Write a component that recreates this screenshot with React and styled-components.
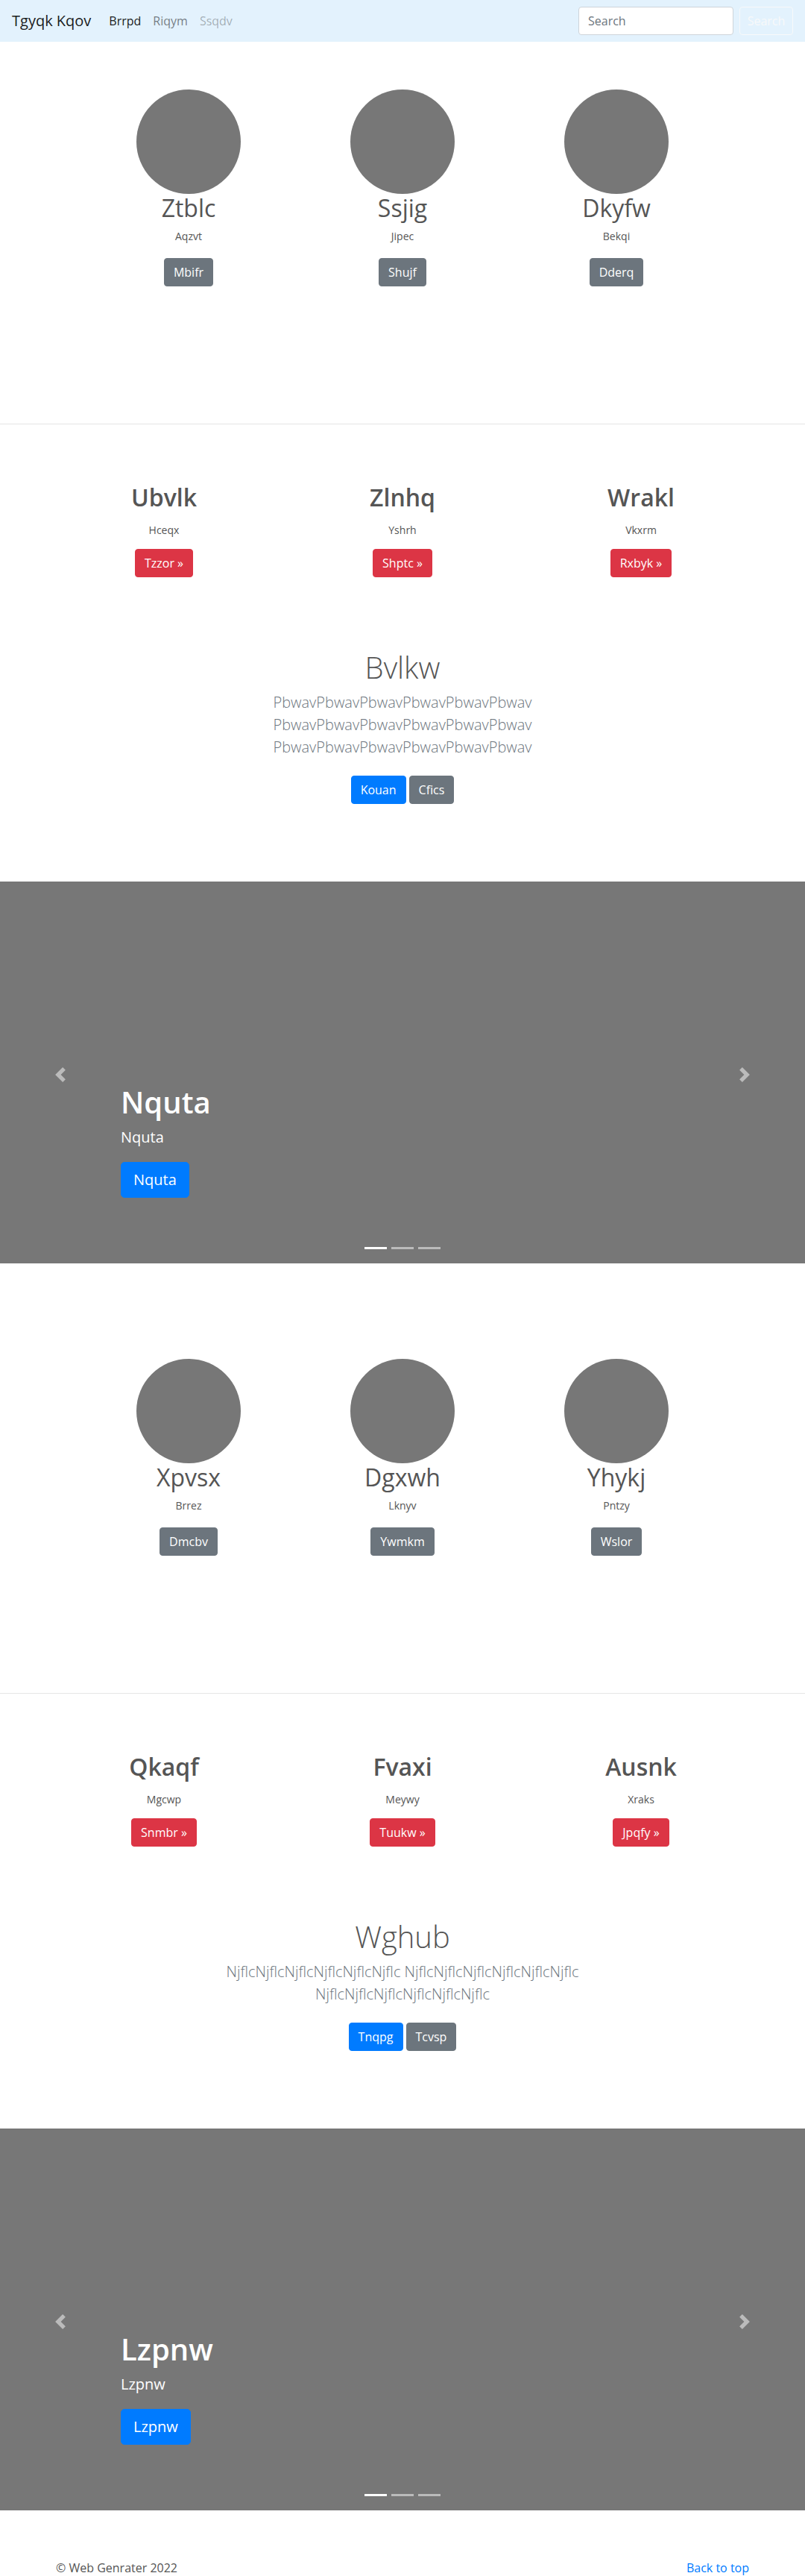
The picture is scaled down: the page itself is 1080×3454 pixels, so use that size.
import styled, { createGlobalStyle } from "styled-components";

const GlobalStyle = createGlobalStyle`
    body {
        margin: 0;
        font-family: "Segoe UI", "Open Sans", "Noto Sans", sans-serif;
        color: #555;
        background: #fff;
    }
    * {
        box-sizing: border-box;
    }
`;

const marketingTop = [
    { title: "Ztblc", text: "Aqzvt", button: "Mbifr" },
    { title: "Ssjig", text: "Jipec", button: "Shujf" },
    { title: "Dkyfw", text: "Bekqi", button: "Dderq" },
];

const marketingBottom = [
    { title: "Xpvsx", text: "Brrez", button: "Dmcbv" },
    { title: "Dgxwh", text: "Lknyv", button: "Ywmkm" },
    { title: "Yhykj", text: "Pntzy", button: "Wslor" },
];

const featuresTop = [
    { title: "Ubvlk", text: "Hceqx", button: "Tzzor »" },
    { title: "Zlnhq", text: "Yshrh", button: "Shptc »" },
    { title: "Wrakl", text: "Vkxrm", button: "Rxbyk »" },
];

const featuresBottom = [
    { title: "Qkaqf", text: "Mgcwp", button: "Snmbr »" },
    { title: "Fvaxi", text: "Meywy", button: "Tuukw »" },
    { title: "Ausnk", text: "Xraks", button: "Jpqfy »" },
];

const repeat = (word, n) => Array(n).fill(word).join("");

const ChevronLeft = () => (
    <svg width="20" height="20" viewBox="0 0 8 8" fill="#fff">
        <path d="M5.25 0l-4 4 4 4 1.5-1.5L4.25 4l2.5-2.5L5.25 0z" />
    </svg>
);

const ChevronRight = () => (
    <svg width="20" height="20" viewBox="0 0 8 8" fill="#fff">
        <path d="M2.75 0l-1.5 1.5L3.75 4l-2.5 2.5L2.75 8l4-4-4-4z" />
    </svg>
);

const Marketing = ({ items, top }) => (
    <MarketingSection $top={top}>
        <MarketingRow>
            {items.map((item) => (
                <MarketingCol key={item.title}>
                    <Circle />
                    <MarketingTitle>{item.title}</MarketingTitle>
                    <SmallText>{item.text}</SmallText>
                    <Button $variant="secondary">{item.button}</Button>
                </MarketingCol>
            ))}
        </MarketingRow>
    </MarketingSection>
);

const Features = ({ items, heading, lead, primary, secondary }) => (
    <FeatureSection>
        <FeatureRow>
            {items.map((item) => (
                <FeatureCol key={item.title}>
                    <FeatureTitle>{item.title}</FeatureTitle>
                    <FeatureText>{item.text}</FeatureText>
                    <Button $variant="danger">{item.button}</Button>
                </FeatureCol>
            ))}
        </FeatureRow>
        <Featurette>
            <FeaturetteHeading>{heading}</FeaturetteHeading>
            <Lead>{lead}</Lead>
            <ButtonGroup>
                <Button $variant="primary">{primary}</Button>
                <Button $variant="secondary">{secondary}</Button>
            </ButtonGroup>
        </Featurette>
    </FeatureSection>
);

const Carousel = ({ title }) => (
    <CarouselBox>
        <Caption>
            <CaptionTitle>{title}</CaptionTitle>
            <CaptionText>{title}</CaptionText>
            <Button $variant="primary" $size="lg">
                {title}
            </Button>
        </Caption>
        <Control $side="left">
            <ChevronLeft />
        </Control>
        <Control $side="right">
            <ChevronRight />
        </Control>
        <Indicators>
            <Indicator $active />
            <Indicator />
            <Indicator />
        </Indicators>
    </CarouselBox>
);

const App = () => {
    const pbwav = repeat("Pbwav", 6);
    const njflc = repeat("Njflc", 6);

    return (
        <>
            <GlobalStyle />
            <Navbar>
                <Brand>Tgyqk Kqov</Brand>
                <NavList>
                    <NavLink $state="active">Brrpd</NavLink>
                    <NavLink>Riqym</NavLink>
                    <NavLink $state="disabled">Ssqdv</NavLink>
                </NavList>
                <SearchForm>
                    <SearchInput placeholder="Search" />
                    <SearchButton type="button">Search</SearchButton>
                </SearchForm>
            </Navbar>

            <Marketing items={marketingTop} top={64} />
            <Divider />
            <Features
                items={featuresTop}
                heading="Bvlkw"
                lead={`${pbwav} ${pbwav} ${pbwav}`}
                primary="Kouan"
                secondary="Cfics"
            />
            <Carousel title="Nquta" />

            <Marketing items={marketingBottom} top={128} />
            <Divider />
            <Features
                items={featuresBottom}
                heading="Wghub"
                lead={`${njflc} ${njflc} ${njflc}`}
                primary="Tnqpg"
                secondary="Tcvsp"
            />
            <Carousel title="Lzpnw" />

            <Footer>
                <FooterText>© Web Genrater 2022</FooterText>
                <FooterLink href="#">Back to top</FooterLink>
            </Footer>
        </>
    );
};
export default App;

const Navbar = styled.nav`
    height: 56px;
    padding: 0 16px;
    display: flex;
    align-items: center;
    background: #e3f2fd;
`;

const Brand = styled.a`
    font-size: 20px;
    color: rgba(0, 0, 0, 0.9);
    margin-right: 16px;
    line-height: 1.5;
`;

const NavList = styled.div`
    display: flex;
    flex: 1;
`;

const linkColors = {
    active: "rgba(0, 0, 0, 0.9)",
    disabled: "rgba(0, 0, 0, 0.3)",
};

const NavLink = styled.a`
    padding: 8px;
    font-size: 16px;
    color: ${(p) => linkColors[p.$state] || "rgba(0, 0, 0, 0.5)"};
`;

const SearchForm = styled.form`
    display: flex;
    gap: 8px;
`;

const SearchInput = styled.input`
    width: 208px;
    height: 38px;
    padding: 6px 12px;
    font: inherit;
    font-size: 16px;
    border: 1px solid #ced4da;
    border-radius: 4px;
    background: #fff;
    &::placeholder {
        color: #6c757d;
    }
`;

const SearchButton = styled.button`
    width: 72px;
    height: 38px;
    font: inherit;
    font-size: 16px;
    color: #f8f9fa;
    background: transparent;
    border: 1px solid #f8f9fa;
    border-radius: 4px;
`;

const buttonColors = {
    primary: "#007bff",
    secondary: "#6c757d",
    danger: "#dc3545",
};

const Button = styled.button`
    font: inherit;
    font-size: ${(p) => (p.$size === "lg" ? "20px" : "16px")};
    line-height: 1.5;
    padding: ${(p) => (p.$size === "lg" ? "8px 16px" : "6px 12px")};
    border-radius: ${(p) => (p.$size === "lg" ? "5px" : "4px")};
    border: 1px solid ${(p) => buttonColors[p.$variant]};
    background: ${(p) => buttonColors[p.$variant]};
    color: #fff;
`;

const MarketingSection = styled.section`
    padding: ${(p) => p.$top}px 0 184px;
`;

const MarketingRow = styled.div`
    width: 861px;
    margin: 0 auto;
    display: grid;
    grid-template-columns: repeat(3, 1fr);
`;

const MarketingCol = styled.div`
    display: flex;
    flex-direction: column;
    align-items: center;
    text-align: center;
`;

const Circle = styled.div`
    width: 140px;
    height: 140px;
    border-radius: 50%;
    background: #777;
`;

const MarketingTitle = styled.h2`
    margin: 0 0 8px;
    font-size: 32px;
    font-weight: 400;
    line-height: 1.2;
    color: #555;
`;

const SmallText = styled.p`
    margin: 0 0 19px;
    font-size: 14px;
    line-height: 1.5;
    color: #555;
`;

const Divider = styled.hr`
    margin: 0;
    border: 0;
    border-top: 1px solid #e5e5e5;
`;

const FeatureSection = styled.section`
    padding: 79px 0 104px;
`;

const FeatureRow = styled.div`
    width: 960px;
    margin: 0 auto;
    display: grid;
    grid-template-columns: repeat(3, 1fr);
`;

const FeatureCol = styled.div`
    padding: 0 15px;
    display: flex;
    flex-direction: column;
    align-items: center;
    text-align: center;
`;

const FeatureTitle = styled.h2`
    margin: 0 0 13px;
    font-size: 32px;
    font-weight: 600;
    line-height: 1.2;
    color: #555;
`;

const FeatureText = styled(SmallText)`
    margin-bottom: 15px;
`;

const Featurette = styled.div`
    margin: 97px auto 0;
    max-width: 500px;
    display: flex;
    flex-direction: column;
    align-items: center;
    text-align: center;
`;

const FeaturetteHeading = styled.h2`
    margin: 0 0 8px;
    font-size: 40px;
    font-weight: 300;
    line-height: 1.2;
    color: #555;
`;

const Lead = styled.p`
    margin: 0 0 23px;
    font-size: 20px;
    font-weight: 300;
    line-height: 1.5;
    color: #6c757d;
`;

const ButtonGroup = styled.div`
    display: flex;
    gap: 4px;
`;

const CarouselBox = styled.section`
    position: relative;
    height: 512px;
    background: #777;
    display: flex;
    flex-direction: column;
    justify-content: flex-end;
    padding: 0 162px 88px;
`;

const Caption = styled.div`
    display: flex;
    flex-direction: column;
    align-items: flex-start;
    color: #fff;
`;

const CaptionTitle = styled.h1`
    margin: 0 0 8px;
    font-size: 40px;
    font-weight: 600;
    line-height: 1.2;
`;

const CaptionText = styled.p`
    margin: 0 0 18px;
    font-size: 20px;
    line-height: 1.5;
`;

const Control = styled.div`
    position: absolute;
    top: 0;
    bottom: 0;
    ${(p) => p.$side}: 0;
    width: 162px;
    display: flex;
    align-items: center;
    justify-content: center;
    opacity: 0.5;
    padding-top: 6px;
`;

const Indicators = styled.div`
    position: absolute;
    left: 0;
    right: 0;
    bottom: 19px;
    display: flex;
    justify-content: center;
    gap: 6px;
`;

const Indicator = styled.span`
    width: 30px;
    height: 3px;
    background: #fff;
    opacity: ${(p) => (p.$active ? 1 : 0.5)};
`;

const Footer = styled.footer`
    width: 960px;
    margin: 0 auto;
    padding: 65px 15px 0;
    display: flex;
    justify-content: space-between;
    font-size: 16px;
    line-height: 1.5;
`;

const FooterText = styled.p`
    margin: 0 0 16px;
    color: #555;
`;

const FooterLink = styled.a`
    color: #007bff;
    text-decoration: none;
`;
